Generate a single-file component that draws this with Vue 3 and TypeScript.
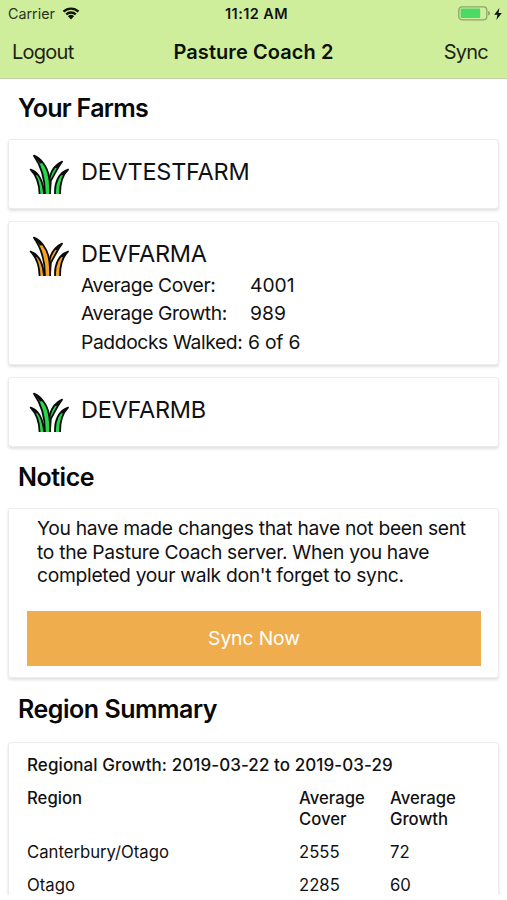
<script setup lang="ts">
interface Stat {
  label: string
  value: string
  inline?: boolean
}
interface Farm {
  name: string
  tone: 'green' | 'amber'
  stats: Stat[]
}
interface RegionRow {
  region: string
  cover: number
  growth: number
}

const farms: Farm[] = [
  { name: 'DEVTESTFARM', tone: 'green', stats: [] },
  {
    name: 'DEVFARMA',
    tone: 'amber',
    stats: [
      { label: 'Average Cover:', value: '4001' },
      { label: 'Average Growth:', value: '989' },
      { label: 'Paddocks Walked:', value: '6 of 6', inline: true },
    ],
  },
  { name: 'DEVFARMB', tone: 'green', stats: [] },
]

const noticeLines: string[] = [
  'You have made changes that have not been sent',
  'to the Pasture Coach server. When you have',
  "completed your walk don't forget to sync.",
]

const regions: RegionRow[] = [
  { region: 'Canterbury/Otago', cover: 2555, growth: 72 },
  { region: 'Otago', cover: 2285, growth: 60 },
]
</script>

<template>
  <div class="screen">
    <header class="header">
      <div class="status">
        <div class="carrier">
          <span class="carrier-name">Carrier</span>
          <svg class="wifi" viewBox="0 0 18 13">
            <path d="M1.5 4.6 A10.8 10.8 0 0 1 16.5 4.6" />
            <path d="M4.2 7.4 A7 7 0 0 1 13.8 7.4" />
            <path class="dot" d="M5.9 9.2 A4.6 4.6 0 0 1 12.1 9.2 L9 12.4 Z" />
          </svg>
        </div>
        <span class="clock">11:12 AM</span>
        <div class="power">
          <svg class="battery" viewBox="0 0 32 15">
            <rect class="shell" x="0.8" y="0.8" width="28" height="13" rx="3.2" />
            <rect class="level" x="2.6" y="2.6" width="19.6" height="9.4" rx="1.2" />
            <path class="cap" d="M30 5 Q32 5.4 32 7.3 Q32 9.2 30 9.6 Z" />
          </svg>
          <svg class="bolt" viewBox="0 0 8 12">
            <path d="M5.4 0 L0.2 6.8 H3.4 L2.4 12 L7.8 4.9 H4.5 Z" />
          </svg>
        </div>
      </div>
      <nav class="nav">
        <a class="nav-link logout">Logout</a>
        <h1 class="title">Pasture Coach 2</h1>
        <a class="nav-link sync">Sync</a>
      </nav>
    </header>

    <main>
      <h2 class="heading farms-heading">Your Farms</h2>
      <section v-for="farm in farms" :key="farm.name" class="card farm">
        <svg class="grass" :class="farm.tone" viewBox="28 25 122 121">
          <path d="M90 149 C82 112 88 66 127 48 C114 64 104 88 93 106 Z" />
          <path d="M42 30 C62 38 82 62 87 92 C91 112 91 130 91 149 H75 C76 108 66 64 42 30 Z" />
          <path d="M32 72 C56 80 70 108 73 149 H59 C59 118 52 92 32 72 Z" />
          <path d="M145 72 C118 80 103 112 106 149 H121 C120 116 127 90 145 72 Z" />
          <g class="tips">
            <path d="M42 30 C53 34 64 43 71 52 L60 54 C54 44 48 36 42 30 Z" />
            <path d="M127 48 C118 52 110 59 105 67 L112 67 C116 60 122 52 127 48 Z" />
            <path d="M32 72 C41 76 49 82 54 89 L46 89 C42 82 36 75 32 72 Z" />
            <path d="M145 72 C135 76 128 82 123 89 L131 89 C135 82 141 75 145 72 Z" />
          </g>
        </svg>
        <div class="farm-body">
          <div class="farm-name">{{ farm.name }}</div>
          <div
            v-for="stat in farm.stats"
            :key="stat.label"
            class="stat"
            :class="{ inline: stat.inline }"
          >
            <span class="stat-label">{{ stat.label }}</span>
            <span class="stat-value">{{ stat.value }}</span>
          </div>
        </div>
      </section>

      <h2 class="heading notice-heading">Notice</h2>
      <section class="card notice">
        <div class="notice-text">
          <div v-for="line in noticeLines" :key="line">{{ line }}</div>
        </div>
        <button class="sync-button" type="button">Sync Now</button>
      </section>

      <h2 class="heading summary-heading">Region Summary</h2>
      <section class="card summary">
        <div class="period">Regional Growth: 2019-03-22 to 2019-03-29</div>
        <div class="row head">
          <span>Region</span>
          <span>Average<br />Cover</span>
          <span>Average<br />Growth</span>
        </div>
        <div v-for="row in regions" :key="row.region" class="row">
          <span class="region">{{ row.region }}</span>
          <span>{{ row.cover }}</span>
          <span>{{ row.growth }}</span>
        </div>
      </section>
    </main>
  </div>
</template>

<style>
body {
  background: #fff;
}
</style>

<style scoped>
.screen {
  box-sizing: border-box;
  width: 507px;
  height: 895px;
  overflow: hidden;
  background: #fff;
  color: #111;
  font-family: Inter, "Liberation Sans", sans-serif;
}
.header {
  box-sizing: border-box;
  height: 79px;
  background: #cfee9c;
  border-bottom: 1px solid #c3d2ab;
}
.status {
  display: grid;
  grid-template-columns: 1fr auto 1fr;
  align-items: center;
  height: 27px;
  padding: 0 5px 0 8px;
  font-size: 14.3px;
}
.carrier {
  display: flex;
  align-items: center;
  gap: 7px;
  color: #2c3322;
}
.wifi {
  width: 18px;
  height: 13px;
  fill: none;
  stroke: #10140a;
  stroke-width: 2.3;
}
.wifi .dot {
  fill: #10140a;
  stroke: none;
}
.clock {
  padding-left: 3px;
  font-weight: 600;
  font-size: 14.5px;
  letter-spacing: 0.4px;
}
.power {
  display: flex;
  align-items: center;
  justify-content: flex-end;
  gap: 4px;
}
.battery {
  width: 32px;
  height: 15px;
}
.shell {
  fill: none;
  stroke: #8fa36d;
  stroke-width: 1.3;
}
.level {
  fill: #4cd964;
}
.cap {
  fill: #8fa36d;
}
.bolt {
  width: 8px;
  height: 12px;
  fill: #10140a;
}
.nav {
  display: grid;
  grid-template-columns: 1fr auto 1fr;
  align-items: center;
  height: 50px;
  padding: 0 12px;
}
.nav-link {
  font-size: 20px;
  letter-spacing: -0.75px;
  color: #1c2413;
}
.sync {
  padding-right: 7px;
  text-align: right;
}
.title {
  margin: 0;
  font-size: 20px;
  font-weight: 600;
  letter-spacing: 0.08px;
  color: #0c1005;
}
.heading {
  margin: 0;
  padding-left: 18px;
  font-size: 25px;
  line-height: 30px;
  font-weight: 600;
  letter-spacing: -0.48px;
  color: #080808;
}
.farms-heading {
  padding-top: 14px;
  padding-bottom: 16px;
  letter-spacing: -0.7px;
}
.card {
  box-sizing: border-box;
  margin: 0 8px 12px;
  border: 1px solid #ececec;
  border-radius: 3px;
  background: #fff;
  box-shadow: 0 2px 3px rgba(0, 0, 0, 0.12);
}
.farm {
  display: flex;
  min-height: 70px;
  padding: 14px 20px 8px;
}
.grass {
  flex: none;
  width: 41px;
  height: 40px;
  margin-right: 11px;
  stroke: #0b0b0b;
  stroke-width: 5.5;
  stroke-linejoin: round;
}
.tips {
  fill: #0b0b0b;
  stroke: none;
}
.green {
  fill: #25d84c;
}
.amber {
  fill: #f5a425;
}
.farm-name {
  font-size: 23.5px;
  line-height: 35px;
  letter-spacing: -0.25px;
}
.stat {
  display: flex;
  font-size: 19.3px;
  line-height: 28.4px;
  white-space: nowrap;
}
.stat-label {
  width: 169px;
  letter-spacing: -0.4px;
}
.inline .stat-label {
  width: 167px;
}
.inline .stat-value {
  letter-spacing: -0.2px;
}
.notice-heading {
  padding-top: 3px;
  padding-bottom: 15.5px;
}
.notice {
  height: 170px;
  padding: 8.5px 18px 0;
}
.notice-text {
  padding-left: 10px;
  font-size: 19.3px;
  line-height: 23.5px;
  letter-spacing: -0.31px;
  white-space: nowrap;
}
.sync-button {
  display: block;
  width: 454px;
  height: 55px;
  margin: 23px 0 0;
  padding: 0;
  border: 0;
  background: #f0ad4e;
  color: #fff;
  font: 400 19.3px Inter, "Liberation Sans", sans-serif;
  letter-spacing: -0.1px;
}
.summary-heading {
  padding-top: 4px;
  padding-bottom: 18px;
}
.summary {
  height: 180px;
  padding: 12px 18px 0;
  font-size: 16.7px;
  line-height: 21px;
}
.period {
  font-size: 17px;
  font-weight: 500;
  letter-spacing: 0.08px;
  white-space: nowrap;
}
.row {
  display: grid;
  grid-template-columns: 272px 91px 1fr;
  margin-top: 12px;
}
.head {
  font-weight: 500;
}
</style>
